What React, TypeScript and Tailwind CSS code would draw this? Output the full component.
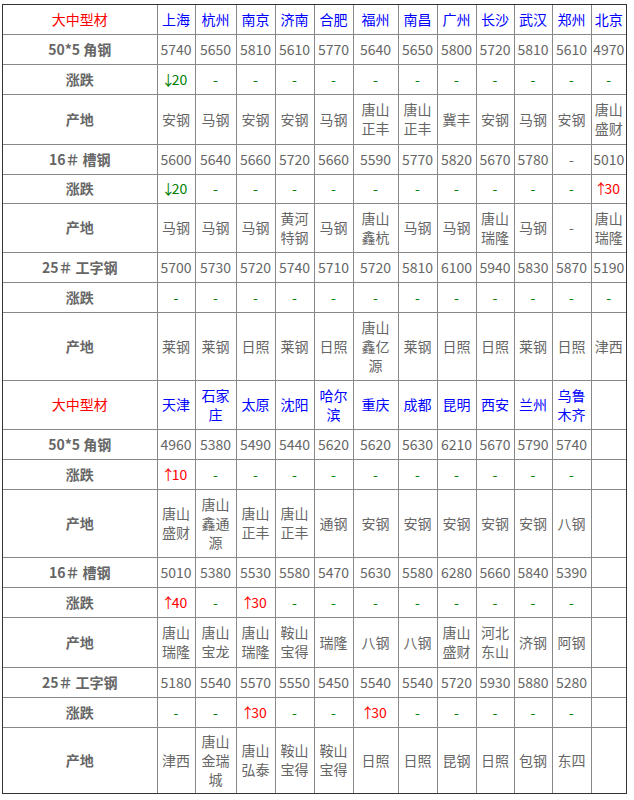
import React from "react";

type Cell = string;

const FONT = {
  fontFamily: '"Noto Sans CJK SC", "Noto Sans", sans-serif',
};

const colWidths = [154, 38, 41, 39, 39, 39, 45, 39, 39, 38, 38, 39, 35];

type Row = {
  label: string;
  kind: "header" | "price" | "change" | "origin";
  cells: Cell[];
  h: string;
};

const section1: Row[] = [
  { label: "大中型材", kind: "header", h: "h-[29px]", cells: ["上海", "杭州", "南京", "济南", "合肥", "福州", "南昌", "广州", "长沙", "武汉", "郑州", "北京"] },
  { label: "50*5 角钢", kind: "price", h: "h-[30px]", cells: ["5740", "5650", "5810", "5610", "5770", "5640", "5650", "5800", "5720", "5810", "5610", "4970"] },
  { label: "涨跌", kind: "change", h: "h-[30px]", cells: ["↓20", "-", "-", "-", "-", "-", "-", "-", "-", "-", "-", "-"] },
  { label: "产地", kind: "origin", h: "h-[50px]", cells: ["安钢", "马钢", "安钢", "安钢", "马钢", "唐山|正丰", "唐山|正丰", "冀丰", "安钢", "马钢", "安钢", "唐山|盛财"] },
  { label: "16＃ 槽钢", kind: "price", h: "h-[30px]", cells: ["5600", "5640", "5660", "5720", "5660", "5590", "5770", "5820", "5670", "5780", "-", "5010"] },
  { label: "涨跌", kind: "change", h: "h-[29px]", cells: ["↓20", "-", "-", "-", "-", "-", "-", "-", "-", "-", "-", "↑30"] },
  { label: "产地", kind: "origin", h: "h-[49px]", cells: ["马钢", "马钢", "马钢", "黄河|特钢", "马钢", "唐山|鑫杭", "马钢", "马钢", "唐山|瑞隆", "马钢", "-", "唐山|瑞隆"] },
  { label: "25＃ 工字钢", kind: "price", h: "h-[30px]", cells: ["5700", "5730", "5720", "5740", "5710", "5720", "5810", "6100", "5940", "5830", "5870", "5190"] },
  { label: "涨跌", kind: "change", h: "h-[30px]", cells: ["-", "-", "-", "-", "-", "-", "-", "-", "-", "-", "-", "-"] },
  { label: "产地", kind: "origin", h: "h-[68px]", cells: ["莱钢", "莱钢", "日照", "莱钢", "日照", "唐山|鑫亿|源", "莱钢", "日照", "日照", "莱钢", "日照", "津西"] },
];

const section2: Row[] = [
  { label: "大中型材", kind: "header", h: "h-[49px]", cells: ["天津", "石家|庄", "太原", "沈阳", "哈尔|滨", "重庆", "成都", "昆明", "西安", "兰州", "乌鲁|木齐", ""] },
  { label: "50*5 角钢", kind: "price", h: "h-[30px]", cells: ["4960", "5380", "5490", "5440", "5620", "5620", "5630", "6210", "5670", "5790", "5740", ""] },
  { label: "涨跌", kind: "change", h: "h-[30px]", cells: ["↑10", "-", "-", "-", "-", "-", "-", "-", "-", "-", "-", ""] },
  { label: "产地", kind: "origin", h: "h-[68px]", cells: ["唐山|盛财", "唐山|鑫通|源", "唐山|正丰", "唐山|正丰", "通钢", "安钢", "安钢", "安钢", "安钢", "安钢", "八钢", ""] },
  { label: "16＃ 槽钢", kind: "price", h: "h-[30px]", cells: ["5010", "5380", "5530", "5580", "5470", "5630", "5580", "6280", "5660", "5840", "5390", ""] },
  { label: "涨跌", kind: "change", h: "h-[30px]", cells: ["↑40", "-", "↑30", "-", "-", "-", "-", "-", "-", "-", "-", ""] },
  { label: "产地", kind: "origin", h: "h-[50px]", cells: ["唐山|瑞隆", "唐山|宝龙", "唐山|瑞隆", "鞍山|宝得", "瑞隆", "八钢", "八钢", "唐山|盛财", "河北|东山", "济钢", "阿钢", ""] },
  { label: "25＃ 工字钢", kind: "price", h: "h-[30px]", cells: ["5180", "5540", "5570", "5550", "5450", "5540", "5540", "5720", "5930", "5880", "5280", ""] },
  { label: "涨跌", kind: "change", h: "h-[30px]", cells: ["-", "-", "↑30", "-", "-", "↑30", "-", "-", "-", "-", "-", ""] },
  { label: "产地", kind: "origin", h: "h-[66px]", cells: ["津西", "唐山|金瑞|城", "唐山|弘泰", "鞍山|宝得", "鞍山|宝得", "日照", "日照", "昆钢", "日照", "包钢", "东四", ""] },
];

function Lines({ text }: { text: string }) {
  const parts = text.split("|");
  return (
    <>
      {parts.map((p, i) => (
        <div key={i}>{p}</div>
      ))}
    </>
  );
}

function ChangeCell({ text }: { text: string }) {
  if (text === "") return null;
  if (text === "-") return <span className="text-[#008000]">-</span>;
  const up = text.startsWith("↑");
  const arrow = text.slice(0, 1);
  const num = text.slice(1);
  return (
    <span className={up ? "text-[#ff0000]" : "text-[#008000]"}>
      <span className="inline-flex w-[7px] justify-center overflow-visible">{arrow}</span>
      {num}
    </span>
  );
}

function RowView({ row }: { row: Row }) {
  return (
    <tr className={row.h}>
      <td
        className={
          row.kind === "header"
            ? "border border-[#888] text-center align-middle text-[#ff0000]"
            : "border border-[#888] text-center align-middle font-bold text-[#666]"
        }
      >
        {row.label}
      </td>
      {row.cells.map((c, i) => {
        let cls = "border border-[#888] p-0 text-center align-middle whitespace-nowrap ";
        let content: React.ReactNode;
        if (row.kind === "header") {
          cls += "text-[#0000ff]";
          content = <Lines text={c} />;
        } else if (row.kind === "change") {
          cls += "text-[#666]";
          content = <ChangeCell text={c} />;
        } else {
          cls += "text-[#666]";
          content = <Lines text={c} />;
        }
        return (
          <td key={i} className={cls}>
            {content}
          </td>
        );
      })}
    </tr>
  );
}

export default function App() {
  return (
    <div className="min-h-[800px] w-[634px] bg-white pl-[2px] pt-[4px]" style={FONT}>
      <div className="w-[625px] border border-[#333]">
        <table className="table-fixed border-collapse border-hidden text-[14px] leading-[19px]" style={{ width: 623 }}>
          <colgroup>
            {colWidths.map((w, i) => (
              <col key={i} style={{ width: w }} />
            ))}
          </colgroup>
          <tbody>
            {section1.map((r, i) => (
              <RowView key={"a" + i} row={r} />
            ))}
            {section2.map((r, i) => (
              <RowView key={"b" + i} row={r} />
            ))}
          </tbody>
        </table>
      </div>
    </div>
  );
}
